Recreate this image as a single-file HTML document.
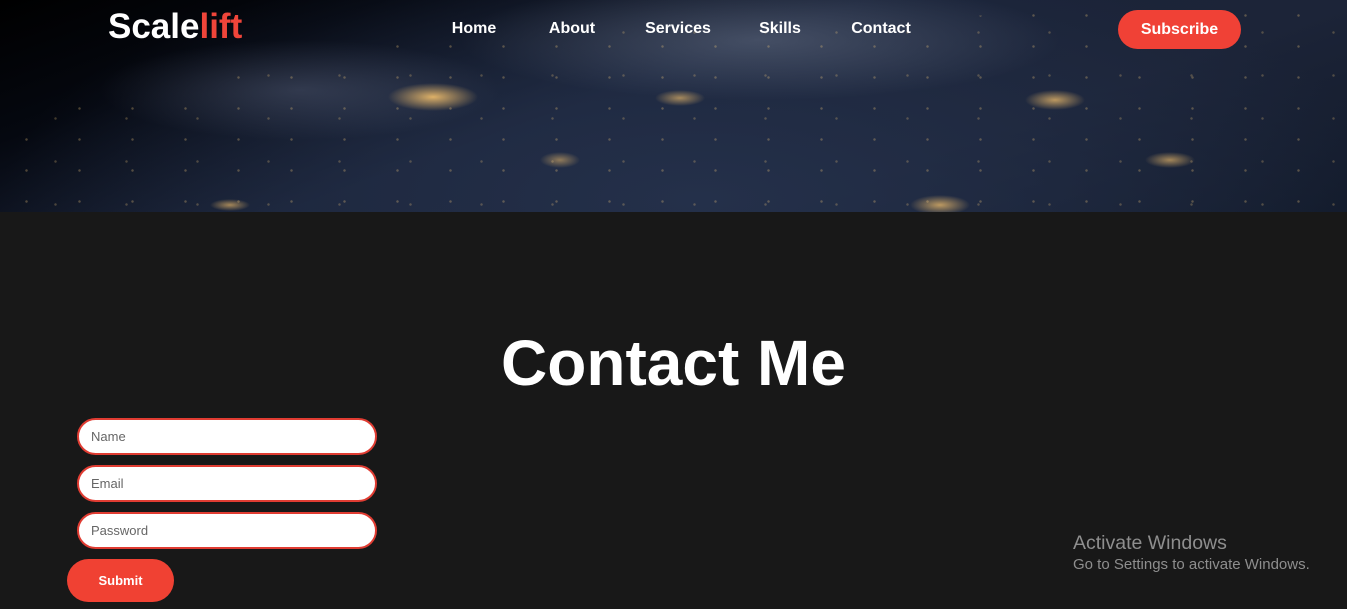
<!DOCTYPE html>
<html><head><style>
*{margin:0;padding:0;box-sizing:border-box}
body{width:1347px;height:609px;background:#181818;font-family:"Liberation Sans",sans-serif;overflow:hidden;position:relative}
.hero{position:absolute;left:0;top:0;width:1347px;height:212px;overflow:hidden;
background:
radial-gradient(ellipse 45px 14px at 433px 97px,rgba(255,200,110,.85),transparent),
radial-gradient(ellipse 30px 10px at 1055px 100px,rgba(255,200,110,.7),transparent),
radial-gradient(ellipse 30px 10px at 940px 205px,rgba(255,200,110,.7),transparent),
radial-gradient(ellipse 25px 8px at 680px 98px,rgba(255,200,110,.6),transparent),
radial-gradient(ellipse 25px 8px at 1170px 160px,rgba(255,200,110,.6),transparent),
radial-gradient(ellipse 20px 8px at 560px 160px,rgba(255,200,110,.5),transparent),
radial-gradient(ellipse 20px 6px at 230px 205px,rgba(255,200,110,.6),transparent),
radial-gradient(ellipse 300px 60px at 760px 40px,rgba(140,150,170,.35),transparent),
radial-gradient(ellipse 200px 50px at 300px 90px,rgba(120,130,160,.3),transparent),
radial-gradient(ellipse 700px 260px at 700px 200px,#24304a,transparent),
linear-gradient(160deg,#000 0%,#050810 20%,#1a2338 45%,#1c2438 70%,#121a2a 100%);}
.dots{position:absolute;inset:0;background-image:radial-gradient(circle,rgba(255,210,130,.8) 1px,transparent 1.5px),radial-gradient(circle,rgba(255,210,130,.7) 1px,transparent 1.5px);background-size:53px 31px,71px 43px;background-position:0 0,20px 11px;opacity:.35;clip-path:polygon(0 120px,400px 40px,1347px 0,1347px 212px,0 212px)}
.logo{position:absolute;left:108px;top:7px;font-size:35px;font-weight:bold;color:#fff}
.logo span{color:#f0453a}
.nav a{position:absolute;top:20px;color:#fff;font-weight:bold;font-size:16px;text-decoration:none;transform:translateX(-50%)}
.sub{position:absolute;left:1118px;top:10px;width:123px;height:39px;border-radius:20px;background:#f04136;color:#fff;font-weight:bold;font-size:16px;text-align:center;line-height:39px}
h1{position:absolute;left:0;width:1347px;top:326px;text-align:center;color:#fff;font-size:64px;font-weight:bold}
.in{position:absolute;left:77px;width:300px;height:37px;border:2px solid #e03c32;border-radius:19px;background:#fff;color:#666;font-size:13px;padding-left:12px;line-height:33px}
.btn{position:absolute;left:67px;top:559px;width:107px;height:43px;border-radius:22px;background:#f04133;color:#fff;font-weight:bold;font-size:13px;text-align:center;line-height:43px}
.w1{position:absolute;left:1073px;top:532px;color:#8e8e8e;font-size:19.5px}
.w2{position:absolute;left:1073px;top:556px;color:#8e8e8e;font-size:15px}
</style></head><body>
<div class="hero"><div class="dots"></div></div>
<div class="logo">Scale<span>lift</span></div>
<div class="nav"><a style="left:474px">Home</a><a style="left:572px">About</a><a style="left:678px">Services</a><a style="left:780px">Skills</a><a style="left:881px">Contact</a></div>
<div class="sub">Subscribe</div>
<h1>Contact Me</h1>
<div class="in" style="top:418px">Name</div>
<div class="in" style="top:465px">Email</div>
<div class="in" style="top:512px">Password</div>
<div class="btn">Submit</div>
<div class="w1">Activate Windows</div>
<div class="w2">Go to Settings to activate Windows.</div>
</body></html>
